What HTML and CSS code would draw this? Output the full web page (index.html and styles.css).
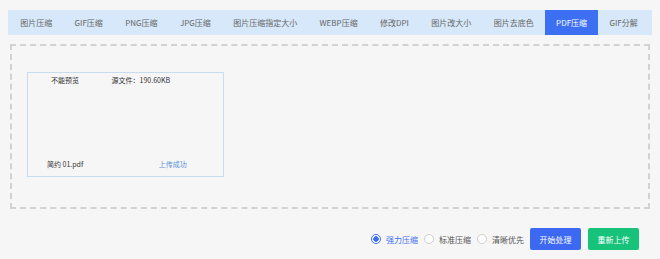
FILE: index.html
```html
<!DOCTYPE html>
<html lang="zh-CN">
  <head>
    <meta charset="UTF-8" />
    <meta name="viewport" content="width=device-width, initial-scale=1.0" />
    <title>PDF压缩</title>
    <link rel="stylesheet" href="styles.css">
  </head>
  <body>
    <div class="tabs">
      <span class="tab">图片压缩</span>
      <span class="tab">GIF压缩</span>
      <span class="tab">PNG压缩</span>
      <span class="tab">JPG压缩</span>
      <span class="tab">图片压缩指定大小</span>
      <span class="tab">WEBP压缩</span>
      <span class="tab">修改DPI</span>
      <span class="tab">图片改大小</span>
      <span class="tab">图片去底色</span>
      <span class="tab active">PDF压缩</span>
      <span class="tab">GIF分解</span>
    </div>

    <!--Upload area-->
    <div class="drop-zone">
      <div class="file-card">
        <div class="card-top">
          <span class="no-preview">不能预览</span>
          <span class="file-size">源文件：190.60KB</span>
        </div>
        <div class="card-bottom">
          <span class="file-name">简约 01.pdf</span>
          <span class="file-status">上传成功</span>
        </div>
      </div>
    </div>

    <div class="actions">
      <label class="radio checked"><span class="dot"></span>强力压缩</label>
      <label class="radio"><span class="dot"></span>标准压缩</label>
      <label class="radio"><span class="dot"></span>清晰优先</label>
      <button class="btn btn-start">开始处理</button>
      <button class="btn btn-reload">重新上传</button>
    </div>
  </body>
</html>
```

FILE: styles.css
```css
body {
  margin: 0;
  padding: 10px 8px 0 8px;
  background-color: #f6f6f7;
  font-family: "Noto Sans CJK SC", "Noto Sans", sans-serif;
  color: #555;
}
.tabs {
  display: flex;
  height: 25px;
  padding-left: 1px;
  background-color: #d6e8f9;
}
.tab {
  display: flex;
  align-items: center;
  padding: 0 11.2px;
  font-size: 8px;
  color: #666;
}
.tab.active {
  background-color: #3d6ff3;
  color: #fff;
}
/* Upload area */
.drop-zone {
  margin: 9px 2px 0 2px;
  height: 165px;
  border: 2px dashed #d2d2d2;
  padding: 26px 0 0 15px;
  box-sizing: border-box;
}
.file-card {
  width: 197px;
  height: 105px;
  border: 1px solid #c6dcf1;
  box-sizing: border-box;
  display: flex;
  flex-direction: column;
  justify-content: space-between;
  padding: 2px 0 7px 0;
  font-size: 7px;
  color: #333;
}
.no-preview {
  margin-left: 23px;
}
.file-size {
  margin-left: 31px;
}
.file-name {
  margin-left: 19px;
}
.file-status {
  margin-left: 74px;
  color: #5a8fd9;
}
/* Bottom bar */
.actions {
  display: flex;
  justify-content: flex-end;
  align-items: center;
  margin-top: 19px;
  padding-right: 13px;
  font-size: 8px;
}
.radio {
  display: flex;
  align-items: center;
  margin-right: 6px;
  color: #555;
}
.radio .dot {
  width: 10px;
  height: 10px;
  border: 1px solid #cfcfcf;
  border-radius: 50%;
  background-color: #fff;
  box-sizing: border-box;
  margin-right: 5px;
}
.radio.checked {
  color: #3d6ff3;
}
.radio.checked .dot {
  border-color: #3d6ff3;
  background: radial-gradient(circle, #3d6ff3 0 2.5px, #fff 3px);
}
.btn {
  width: 51px;
  height: 22px;
  border: none;
  border-radius: 2px;
  color: #fff;
  font-family: inherit;
  font-size: 8px;
  padding: 0;
}
.btn-start {
  background-color: #3c68f2;
}
.btn-reload {
  background-color: #17c27b;
  margin-left: 7px;
}
```
